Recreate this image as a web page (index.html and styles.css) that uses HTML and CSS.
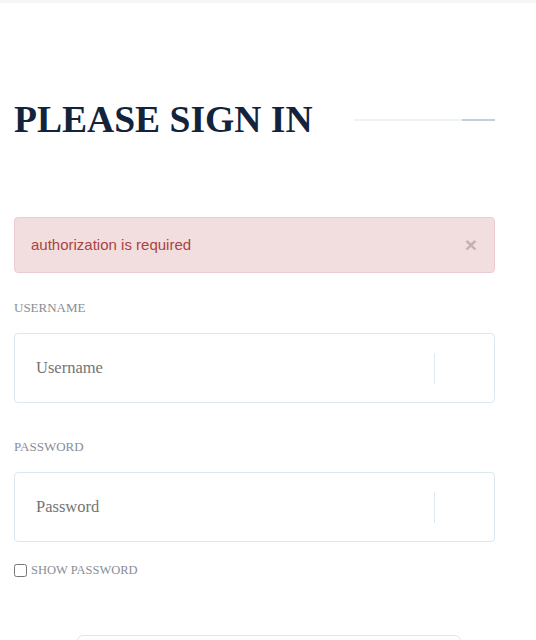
FILE: index.html
```html
<!DOCTYPE html>
<html lang="en">
<head>
<meta charset="utf-8">
<title>Please sign in</title>
<link rel="stylesheet" href="styles.css">
</head>
<body>
<div class="topbar"></div>
<main class="page">
  <div class="title-row">
    <h1 class="title">PLEASE SIGN IN</h1>
    <div class="title-line"></div>
  </div>

  <div class="alert">
    <span class="alert-text">authorization is required</span>
    <span class="alert-close">&times;</span>
  </div>

  <label class="field-label" for="username">USERNAME</label>
  <div class="field">
    <input class="field-input" id="username" type="text" placeholder="Username">
    <div class="field-divider"></div>
    <div class="field-addon"></div>
  </div>

  <label class="field-label field-label-second" for="password">PASSWORD</label>
  <div class="field">
    <input class="field-input" id="password" type="password" placeholder="Password">
    <div class="field-divider"></div>
    <div class="field-addon"></div>
  </div>

  <label class="show-row">
    <input class="show-check" type="checkbox">
    <span class="show-text">SHOW PASSWORD</span>
  </label>

  <div class="button-row">
    <button class="submit" type="button"></button>
  </div>
</main>
</body>
</html>
```

FILE: styles.css
```css
html, body {
  margin: 0;
  padding: 0;
  background: #ffffff;
  overflow: hidden;
}

body {
  font-family: "Liberation Serif", "Times New Roman", serif;
}

.topbar {
  height: 3px;
  background: #f6f6f6;
}

.page {
  padding: 0 41px 0 14px;
}

.title-row {
  display: flex;
  align-items: center;
  margin-top: 98px;
}

.title {
  margin: 0;
  font-family: "Liberation Serif", "Times New Roman", serif;
  font-weight: bold;
  font-size: 37.6px;
  line-height: 38px;
  color: #12233b;
  white-space: nowrap;
}

.title-line {
  flex: 1;
  height: 2px;
  margin-left: 41px;
  background: linear-gradient(to right, #eef3f6 0, #eef3f6 calc(100% - 33px), #c3d0d9 calc(100% - 33px), #c3d0d9 100%);
}

.alert {
  display: flex;
  align-items: center;
  justify-content: space-between;
  margin-top: 78px;
  padding: 16px 17px 16px 16px;
  border: 1px solid #ebccd1;
  border-radius: 4px;
  background: #f2dede;
}

.alert-text {
  font-family: "Liberation Sans", Arial, sans-serif;
  font-size: 15px;
  line-height: 22px;
  color: #a94442;
}

.alert-close {
  font-family: "Liberation Sans", Arial, sans-serif;
  font-size: 21px;
  font-weight: bold;
  line-height: 22px;
  color: #000000;
  opacity: 0.2;
}

.field-label {
  display: block;
  margin-top: 26px;
  font-size: 13px;
  line-height: 18px;
  color: #898e96;
}

.field-label-second {
  margin-top: 35px;
}

.field {
  display: flex;
  align-items: center;
  height: 68px;
  margin-top: 16px;
  border: 1px solid #dae8ef;
  border-radius: 4px;
  background: #ffffff;
}

.field-input {
  flex: 1;
  min-width: 0;
  height: 100%;
  margin: 0;
  padding: 0 0 0 21px;
  border: 0;
  outline: none;
  background: transparent;
  font-family: "Liberation Serif", "Times New Roman", serif;
  font-size: 16.5px;
  color: #555555;
}

.field-input::placeholder {
  color: #747474;
  opacity: 1;
}

.field-divider {
  width: 1px;
  height: 31px;
  background: #dfe8ee;
}

.field-addon {
  width: 59px;
}

.show-row {
  display: flex;
  align-items: center;
  margin-top: 21px;
  height: 15px;
}

.show-check {
  width: 13px;
  height: 13px;
  margin: 0 4px 0 0;
}

.show-text {
  font-size: 12.5px;
  line-height: 15px;
  color: #898e96;
}

.button-row {
  margin-top: 57px;
  padding-left: 63px;
}

.submit {
  display: block;
  width: 384px;
  height: 60px;
  border: 1px solid #dae8ef;
  border-radius: 6px;
  background: #ffffff;
}
```
